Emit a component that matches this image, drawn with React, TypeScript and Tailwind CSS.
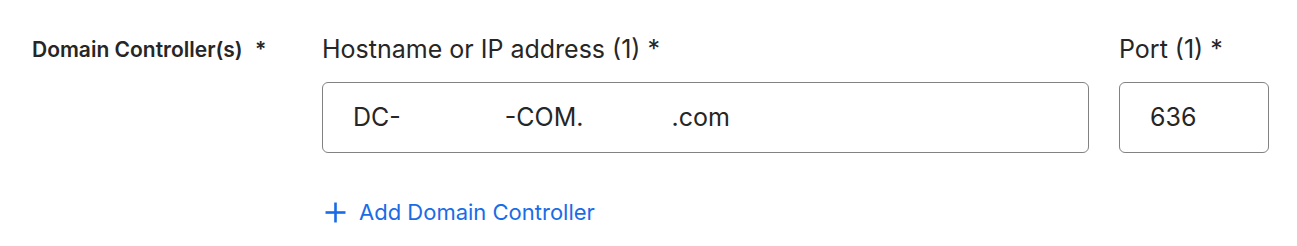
export default function App() {
  return (
    <main
      className="bg-white w-[1297px] h-[246px] pl-[32px] pt-[34px] text-[#262626]"
      style={{ fontFamily: "Inter, 'Noto Sans', sans-serif" }}
    >
      <div className="flex">
        <div className="w-[290px] pt-[1px] text-[21px] font-semibold leading-[30px]">
          Domain Controller(s) <span className="ml-[7px]">*</span>
        </div>
        <div className="flex flex-col">
          <div className="flex gap-[30px]">
            <div className="flex flex-col">
              <label className="text-[25px] leading-[30px] mb-[18px]">Hostname or IP address (1) *</label>
              <div className="w-[767px] h-[71px] border-[1.5px] border-[#828282] rounded-[6px] flex items-center px-[30px] text-[25px]">
                <span>DC-</span>
                <span className="w-[104px]" />
                <span>-COM.</span>
                <span className="w-[88px]" />
                <span>.com</span>
              </div>
            </div>
            <div className="flex flex-col">
              <label className="text-[25px] leading-[30px] mb-[18px]">Port (1) *</label>
              <div className="w-[150px] h-[71px] border-[1.5px] border-[#828282] rounded-[6px] flex items-center px-[30px] text-[25px]">
                636
              </div>
            </div>
          </div>
          <button className="mt-[43px] ml-[3px] flex items-center gap-[13px] text-[#1a6ce6] text-[22px] self-start">
            <svg width="21" height="21" viewBox="0 0 20 20" stroke="currentColor" strokeWidth="2.5">
              <line x1="10" y1="0.5" x2="10" y2="19.5" />
              <line x1="0.5" y1="10" x2="19.5" y2="10" />
            </svg>
            Add Domain Controller
          </button>
        </div>
      </div>
    </main>
  );
}
